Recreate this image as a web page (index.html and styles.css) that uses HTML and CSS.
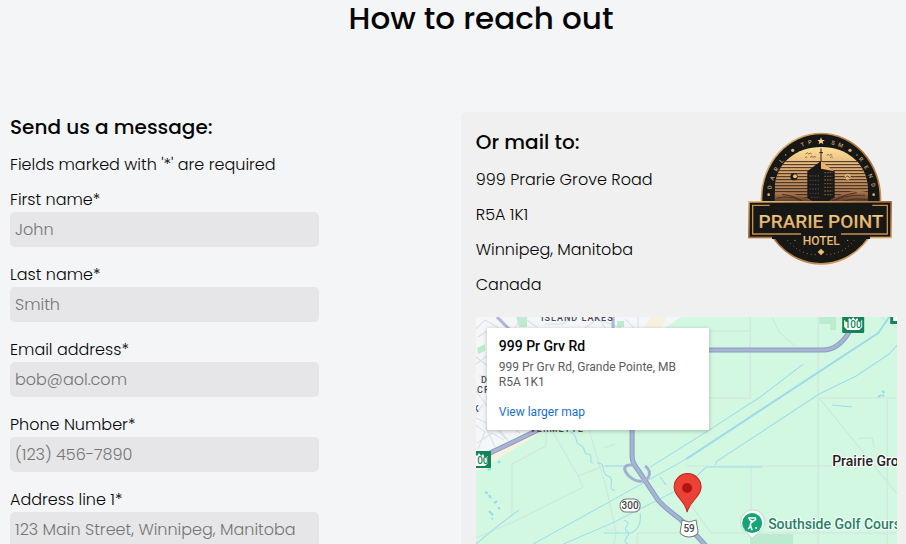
FILE: index.html
```html
<!DOCTYPE html>
<html lang="en">
<head>
<meta charset="utf-8">
<meta name="viewport" content="width=device-width, initial-scale=1">
<title>How to reach out</title>
<link rel="stylesheet" href="styles.css">
</head>
<body>
<header class="page-header"><h1>How to reach out</h1></header>
<main class="contact">
  <form class="message">
    <h2>Send us a message:</h2>
    <p>Fields marked with '*' are required</p>
    <div class="field"><label for="first">First name*</label><input id="first" type="text" placeholder="John" required></div>
    <div class="field"><label for="last">Last name*</label><input id="last" type="text" placeholder="Smith" required></div>
    <div class="field"><label for="email">Email address*</label><input id="email" type="email" placeholder="bob@aol.com" required></div>
    <div class="field"><label for="phone">Phone Number*</label><input id="phone" type="tel" placeholder="(123) 456-7890" required></div>
    <div class="field"><label for="address">Address line 1*</label><input id="address" type="text" placeholder="123 Main Street, Winnipeg, Manitoba" required></div>
  </form>
  <section class="mail">
    <div class="mail-top">
      <address class="postal">
        <h2>Or mail to:</h2>
        <p>999 Prarie Grove Road</p>
        <p>R5A 1K1</p>
        <p>Winnipeg, Manitoba</p>
        <p>Canada</p>
      </address>
      <svg class="logo" viewBox="0 6 498 435" role="img" aria-label="Prarie Point Hotel">
        <defs>
          <linearGradient id="gold" x1="0" y1="0" x2="1" y2="1"><stop offset="0" stop-color="#e9c078"/><stop offset=".5" stop-color="#a8713b"/><stop offset="1" stop-color="#e2b069"/></linearGradient>
          <linearGradient id="letters" x1="0" y1="0" x2="0" y2="1"><stop offset="0" stop-color="#f6d892"/><stop offset="1" stop-color="#d99c55"/></linearGradient>
          <linearGradient id="sky" x1="0" y1="0" x2="0" y2="1"><stop offset="0" stop-color="#ffe5a0"/><stop offset=".35" stop-color="#e3b478"/><stop offset="1" stop-color="#80502f"/></linearGradient>
          <linearGradient id="hill" x1="0" y1="0" x2="0" y2="1"><stop offset="0" stop-color="#b37b51"/><stop offset="1" stop-color="#2a1a14"/></linearGradient>
          <pattern id="stripes" width="8" height="9" patternUnits="userSpaceOnUse"><path d="M0 2H8" stroke="#39251b" stroke-width="3"/></pattern>
          <clipPath id="scene"><path d="M104 245V190C107 112 170 66 244 66S380 112 384 190V245Z"/></clipPath>
        </defs>
        <ellipse cx="243" cy="221" rx="181" ry="198" fill="url(#gold)"/>
        <ellipse cx="243" cy="221" rx="176" ry="193" fill="#171715"/>
        <g clip-path="url(#scene)">
          <rect x="100" y="60" width="290" height="190" fill="url(#sky)"/>
          <rect x="100" y="107" width="290" height="120" fill="url(#stripes)"/>
          <path d="M100 205Q165 190 237 245H100Z" fill="url(#hill)"/>
          <path d="M390 203Q315 183 246 245H390Z" fill="url(#hill)"/>
          <path d="M110 220Q160 205 206 242M126 208Q170 212 204 239M375 211Q310 206 260 239M350 203Q300 210 256 241M384 224Q322 216 280 242" fill="none" stroke="#493025" stroke-width="3"/>
          <path d="M202 139L242 109L284 139V217L245 243L202 220Z" fill="#19191a"/>
          <path d="M243 108L283 139L243 131Z" fill="#efb365"/>
          <path d="M243 70V111M238 83H249" stroke="#2a231c" stroke-width="3"/>
          <path d="M253 143H278M253 154H278M253 165H278M253 176H278M253 187H278M253 198H278M253 209H278" stroke="#785333" stroke-width="4" stroke-dasharray="5 3"/>
          <path d="M209 153H239M209 166H239M209 179H239M209 192H239M209 205H239M214 217H239" stroke="#484139" stroke-width="4" stroke-dasharray="4 4"/>
          <path d="M197 87q6-7 9 0q7-5 9 0M210 97q6-6 9 0q7-5 9 0M195 98q4-5 7 0M260 91q5-5 8 0q5-5 9 0M270 98q5-5 8 0" fill="none" stroke="#604020" stroke-width="2"/>
          <circle cx="162" cy="155" r="11" fill="#231b16"/><circle cx="165" cy="154" r="6" fill="#e5b97c"/>
          <circle cx="323" cy="155" r="9" fill="#e2b77a"/><path d="M316 158Q324 148 329 159" fill="none" stroke="#62412b" stroke-width="3"/>
        </g>
        <path d="M243 37L246 45H254L248 50L250 58L243 53L236 58L238 50L232 45H240Z" fill="#f8d388"/>
        <g fill="#dfb26c"><circle cx="158" cy="76" r="5"/><circle cx="330" cy="76" r="5"/><circle cx="137" cy="90" r="2"/><circle cx="351" cy="90" r="2"/><circle cx="86" cy="209" r="4"/><circle cx="401" cy="209" r="4"/></g>
        <g class="logo-ring">
          <text transform="translate(190 64) rotate(-22)">T</text><text transform="translate(211 57) rotate(-12)">P</text>
          <text transform="translate(278 59) rotate(14)">S</text><text transform="translate(299 66) rotate(24)">M</text>
          <text transform="translate(128 111) rotate(-48)">L</text><text transform="translate(113 136) rotate(-58)">R</text><text transform="translate(102 162) rotate(-68)">A</text><text transform="translate(95 188) rotate(-80)">D</text>
          <text transform="translate(359 107) rotate(48)">R</text><text transform="translate(374 130) rotate(58)">E</text><text transform="translate(386 155) rotate(68)">N</text><text transform="translate(394 181) rotate(80)">D</text>
        </g>
        <rect x="24" y="228" width="432" height="112" fill="url(#gold)"/>
        <rect x="29" y="233" width="422" height="102" fill="#171715"/>
        <rect x="96" y="330" width="294" height="12" fill="#171715"/>
        <path d="M89 241H38V327H183M397 241H442V327H303" fill="none" stroke="#c88d4d" stroke-width="4"/>
        <text class="logo-name" x="243" y="308">PRARIE POINT</text>
        <text class="logo-hotel" x="244" y="361">HOTEL</text>
        <path d="M142 345Q178 389 229 389M344 345Q308 389 257 389" fill="none" stroke="#a37440" stroke-width="3" stroke-dasharray="3 9"/>
        <path d="M243 371L253 381L243 391L233 381Z" fill="#efbd76"/>
        <circle cx="165" cy="346" r="2" fill="#d7a461"/><circle cx="323" cy="346" r="2" fill="#d7a461"/>
      </svg>
    </div>
    <div class="map">
      <svg class="map-art" viewBox="476 317 421 250" role="img" aria-label="Map of Prairie Grove Road">
        <rect x="476" y="317" width="421" height="300" fill="#d2f8e2"/>
        <path d="M476 317H681L660 331L535 435L476 468Z" fill="#f4f6f8"/>
        <path d="M651 317H667L660 329H642ZM476 463L535 430H545L476 472Z" fill="#f7f1df"/>
        <path d="M516 317H527V327H519ZM477 348L485 344V351L478 354ZM617 321h7v6h-7zM819 317h17v13h-6v-6h-11z" fill="#bcecd0"/>
        <g fill="none" stroke="#d9dfe7" stroke-width="1">
          <path d="M476 329L485 320L499 328M478 337L492 328M476 357L488 366M476 364L487 356M479 376H488M476 391L493 414L520 433M476 418L495 427L506 439M483 405L476 413M477 443L492 433L504 440M486 427L495 447M500 430L510 443M476 425L485 432L478 449M514 329L522 317L537 327M545 324H563L572 317M585 328L597 319L621 328M598 317L605 328M625 319L634 328M638 317V329"/>
          <path d="M497 317L510 330M613 317V328" stroke="#a9b8d3" stroke-width="3"/>
        </g>
        <g fill="none" stroke="#cfe4de" stroke-width="1">
          <path d="M750 317V398H709M709 331H750M772 318L779 332L795 346M818 317V544M686 466H897M819 398H897M819 398L897 494M887 398V544M858 439L862 438H872L874 447M553 432L578 476L583 487L515 521L476 538M512 517V464L546 446V430M589 430L606 487L616 532L614 544M578 476L604 466H625M687 500L711 533H897M751 467V534M637 544V533H680M605 530H616M615 444L604 448M881 317L897 328"/>
        </g>
        <g fill="none" stroke="#9edce9" stroke-width="1">
          <path d="M650 467L709 430L760 397L803 364M715 465L717 461L819 394L856 376L889 354L897 345M687 485L706 467H762M476 544Q499 524 519 510M533 544L607 503L686 459L878 333L889 317M563 544L612 523L687 485M605 466H627M660 477L666 485M832 405L852 407M640 513Q642 528 631 533H604"/>
          <path d="M686 459L878 333L889 317" stroke-width="2"/>
          <path d="M570 431C580 437 573 442 580 445S582 454 588 454S588 463 593 463M597 463C607 462 600 474 608 476S606 491 615 490M624 520C634 524 621 527 627 531S619 540 628 544"/>
        </g>
        <path d="M485 492l3 1M489 495l2 3M494 503l3-2M498 507l2 2M489 511l4 4M492 518l1 1M498 463l2-2M488 470l3-2M878 397l3-2M882 391l2 2M882 396l2-1" fill="none" stroke="#8adcee" stroke-width="2"/>
        <g fill="none" stroke="#8b9bc1" stroke-width="5">
          <path d="M490 453L540 429M632 429V456Q632 463 638 470L658 500Q665 508 680 519Q691 529 706 546M709 350H823Q838 350 849 332"/>
          <path d="M632 465C617 464 628 479 638 481S654 472 645 466" stroke="#a3b0d0" stroke-width="3"/>
        </g>
        <path d="M490 453L540 429M632 429V456Q632 463 638 470L658 500Q665 508 680 519Q691 529 706 546M709 350H823Q838 350 849 332" fill="none" stroke="#a8b4d4" stroke-width="3"/>
        <g class="map-area"><text x="541" y="321">ISLAND LAKES</text><text x="530" y="432">VERMETTE</text><text x="481" y="383">D</text><text x="477" y="393">CRE</text><text x="473" y="412">K</text></g>
        <g fill="#138455"><rect x="842" y="315" width="22" height="18" rx="1"/><rect x="469" y="451" width="22" height="17" rx="1"/><rect x="890" y="312" width="10" height="12"/></g>
        <g fill="#fff"><path id="leaf" d="M844 320L847 322L849 318L851 320L853 317L855 320L857 318L859 322L862 320V327L859 330H847L844 327Z"/><use href="#leaf" x="-374" y="136"/><rect x="893" y="317" width="4" height="4"/></g>
        <g class="shield"><text x="853" y="328">100</text><text x="480" y="464">100</text></g>
        <rect x="620" y="499" width="20" height="13" rx="6" fill="#fff" stroke="#737b7c"/><text class="route" x="630" y="509">300</text>
        <path d="M682 520L689 522L696 520L698 532Q697 536 689 537Q681 536 680 532Z" fill="#fff" stroke="#737b7c"/><text class="route" x="689" y="532">59</text>
        <path d="M687 512C685 500 674 497 674 487A13 13 0 0 1 701 487C701 497 690 500 687 512Z" fill="#ea4335" stroke="#c5221f"/><circle cx="687" cy="488" r="5" fill="#b31412"/>
        <path d="M750 534H793V560H750Z" fill="#bcecd0"/>
        <path d="M752 538L746 532A12 12 0 1 1 759 532Z" fill="#fff" stroke="#c5dbd1"/><circle cx="752" cy="523" r="10" fill="#16a477"/>
        <path d="M748 518H756M749 519L752 522L756 519M752 520L750 525L752 530M751 525L748 529" fill="none" stroke="#fff" stroke-width="1.5"/><circle cx="756" cy="528" r="1" fill="#fff"/>
        <text class="place" x="832" y="466">Prairie Grove</text><text class="golf" x="768" y="529">Southside Golf Course</text>
      </svg>
      <div class="map-card"><h3>999 Pr Grv Rd</h3><p>999 Pr Grv Rd, Grande Pointe, MB R5A 1K1</p><a href="#map">View larger map</a></div>
    </div>
  </section>
</main>
</body>
</html>
```
FILE: styles.css
```css
* { box-sizing: border-box; }
body {
  margin: 0;
  height: 100vh;
  overflow: hidden;
  display: flex;
  flex-direction: column;
  background: #f4f5f7;
  color: #050505;
  font: 300 16px/25px Poppins, Inter, sans-serif;
}
h1, h2, h3, p { margin: 0; }
.page-header { flex: none; height: 112px; padding-left: 56px; text-align: center; }
h1 { font-size: 31px; line-height: 36px; font-weight: 500; }
h2 { font-size: 20px; line-height: 30px; font-weight: 500; }
.contact { flex: 1; min-height: 0; display: grid; grid-template-columns: 1.035fr 1fr; }
.message { padding: 0 10px; }
.message p { margin: 10px 0; }
.field { display: flex; flex-direction: column; width: 70%; margin-bottom: 15px; }
.field input {
  width: 100%;
  height: 35px;
  padding: 0 5px;
  border: 0;
  border-radius: 5px;
  background: #e6e6e8;
  font: inherit;
}
.field input::placeholder { color: #757575; opacity: 1; }
.mail {
  display: flex;
  flex-direction: column;
  min-width: 0;
  min-height: 0;
  padding: 15px 9px 0 15px;
  border-radius: 5px 0 0 0;
  background: #f0f0f0;
}
.mail-top { display: flex; justify-content: space-between; margin-bottom: 20px; }
.postal { font-style: normal; }
.postal p { margin-top: 10px; }
.logo { flex: none; width: 166px; height: 145px; margin-right: -9px; }
.logo-name, .logo-hotel { font-family: Roboto, sans-serif; font-weight: 500; text-anchor: middle; fill: url(#letters); }
.logo-name { font-size: 57px; }
.logo-hotel { font-size: 36px; }
.logo-ring { font: 500 17px Roboto, sans-serif; fill: #c9a572; text-anchor: middle; }
.map { position: relative; flex: 1; min-height: 0; overflow: hidden; font-family: Roboto, sans-serif; font-weight: 400; }
.map-art { display: block; width: 100%; height: auto; }
.map-area { font-size: 9px; font-weight: 500; letter-spacing: 1px; fill: #464c55; }
.shield { font-size: 10px; font-weight: 500; text-anchor: middle; fill: #138455; }
.route { font-size: 10px; font-weight: 500; text-anchor: middle; fill: #444; }
.place, .golf { font-size: 14px; font-weight: 500; stroke: #fff; stroke-width: 2px; paint-order: stroke; }
.place { fill: #222; }
.golf { fill: #238263; }
.map-card {
  position: absolute;
  top: 11px;
  left: 11px;
  width: 222px;
  padding: 8px 12px 10px;
  background: #fff;
  box-shadow: 0 1px 4px rgb(0 0 0 / 25%);
  font-size: 12px;
  line-height: 15px;
}
.map-card h3 { font-size: 14px; line-height: 20px; font-weight: 500; }
.map-card p { margin: 4px 0 15px; color: #5b5b5b; }
.map-card a { display: block; color: #1a6fc9; text-decoration: none; }
```
